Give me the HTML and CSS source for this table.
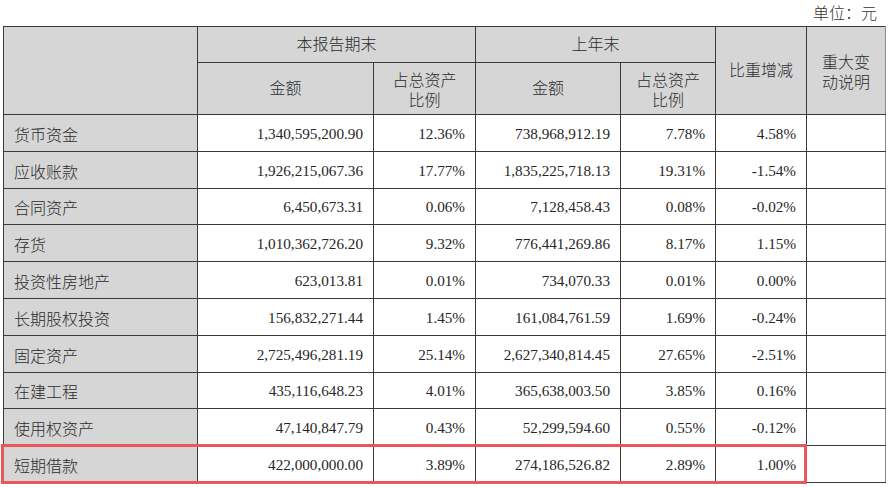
FILE: index.html
```html
<!DOCTYPE html>
<html lang="zh-CN">
<head>
<meta charset="utf-8">
<link rel="stylesheet" href="styles.css">
</head>
<body>
<div class="unit">单位：元</div>
<div class="wrap">
<table class="sheet">
<colgroup>
<col class="c-name"><col class="c-amt"><col class="c-pct"><col class="c-amt2"><col class="c-pct2"><col class="c-chg"><col class="c-note">
</colgroup>
<thead>
<tr class="h1">
<th rowspan="2"></th>
<th colspan="2">本报告期末</th>
<th colspan="2">上年末</th>
<th rowspan="2">比重增减</th>
<th rowspan="2" class="note-h">重大变<br>动说明</th>
</tr>
<tr class="h2">
<th>金额</th>
<th class="two">占总资产<br>比例</th>
<th>金额</th>
<th class="two">占总资产<br>比例</th>
</tr>
</thead>
<tbody>
<tr><td class="name">货币资金</td><td>1,340,595,200.90</td><td>12.36%</td><td>738,968,912.19</td><td>7.78%</td><td>4.58%</td><td></td></tr>
<tr><td class="name">应收账款</td><td>1,926,215,067.36</td><td>17.77%</td><td>1,835,225,718.13</td><td>19.31%</td><td>-1.54%</td><td></td></tr>
<tr><td class="name">合同资产</td><td>6,450,673.31</td><td>0.06%</td><td>7,128,458.43</td><td>0.08%</td><td>-0.02%</td><td></td></tr>
<tr><td class="name">存货</td><td>1,010,362,726.20</td><td>9.32%</td><td>776,441,269.86</td><td>8.17%</td><td>1.15%</td><td></td></tr>
<tr><td class="name">投资性房地产</td><td>623,013.81</td><td>0.01%</td><td>734,070.33</td><td>0.01%</td><td>0.00%</td><td></td></tr>
<tr><td class="name">长期股权投资</td><td>156,832,271.44</td><td>1.45%</td><td>161,084,761.59</td><td>1.69%</td><td>-0.24%</td><td></td></tr>
<tr><td class="name">固定资产</td><td>2,725,496,281.19</td><td>25.14%</td><td>2,627,340,814.45</td><td>27.65%</td><td>-2.51%</td><td></td></tr>
<tr><td class="name">在建工程</td><td>435,116,648.23</td><td>4.01%</td><td>365,638,003.50</td><td>3.85%</td><td>0.16%</td><td></td></tr>
<tr><td class="name">使用权资产</td><td>47,140,847.79</td><td>0.43%</td><td>52,299,594.60</td><td>0.55%</td><td>-0.12%</td><td></td></tr>
<tr><td class="name">短期借款</td><td>422,000,000.00</td><td>3.89%</td><td>274,186,526.82</td><td>2.89%</td><td>1.00%</td><td></td></tr>
</tbody>
</table>
<div class="highlight"></div>
</div>
</body>
</html>
```
FILE: styles.css
```css
html, body {
  margin: 0;
  padding: 0;
  background: #ffffff;
}
body {
  width: 888px;
  height: 487px;
  overflow: hidden;
  font-family: "Liberation Serif", "Noto Sans CJK SC", serif;
  color: #262626;
}
.unit {
  height: 26px;
  line-height: 28px;
  text-align: right;
  padding-right: 11px;
  font-size: 16px;
  font-weight: 300;
  color: #333;
}
.wrap {
  position: relative;
  margin-left: 3px;
  width: 882px;
}
.sheet {
  border-collapse: collapse;
  table-layout: fixed;
  width: 882px;
  font-size: 15.2px;
}
.c-name { width: 194px; }
.c-amt { width: 176px; }
.c-pct { width: 102px; }
.c-amt2 { width: 145px; }
.c-pct2 { width: 95px; }
.c-chg { width: 91px; }
.c-note { width: 79px; }
.sheet th, .sheet td {
  border: 1px solid #3a3a3a;
  padding: 0 10px;
}
.sheet th {
  background: #d6d6d6;
  font-weight: 300;
  font-size: 16px;
  text-align: center;
  vertical-align: middle;
  line-height: 20px;
  color: #2b2b2b;
}
.sheet thead th:last-child {
  border-right-color: #8a8a8a;
}
.h1 { height: 36px; }
.h2 { height: 52px; }
.sheet th.two { padding-top: 4px; }
.sheet th.note-h { padding: 4px 4px 0; }
.sheet tbody tr { height: 36.8px; }
.sheet td {
  text-align: right;
  vertical-align: middle;
  padding-top: 2px;
}
.sheet td.name {
  background: #d6d6d6;
  text-align: left;
  font-size: 16px;
  font-weight: 300;
  color: #2b2b2b;
}
.sheet td:last-child {
  border-right-color: #8a8a8a;
}
.highlight {
  position: absolute;
  left: -2px;
  top: 418px;
  width: 806px;
  height: 40px;
  box-sizing: border-box;
  border: 3.5px solid #e9575d;
  pointer-events: none;
}
```
